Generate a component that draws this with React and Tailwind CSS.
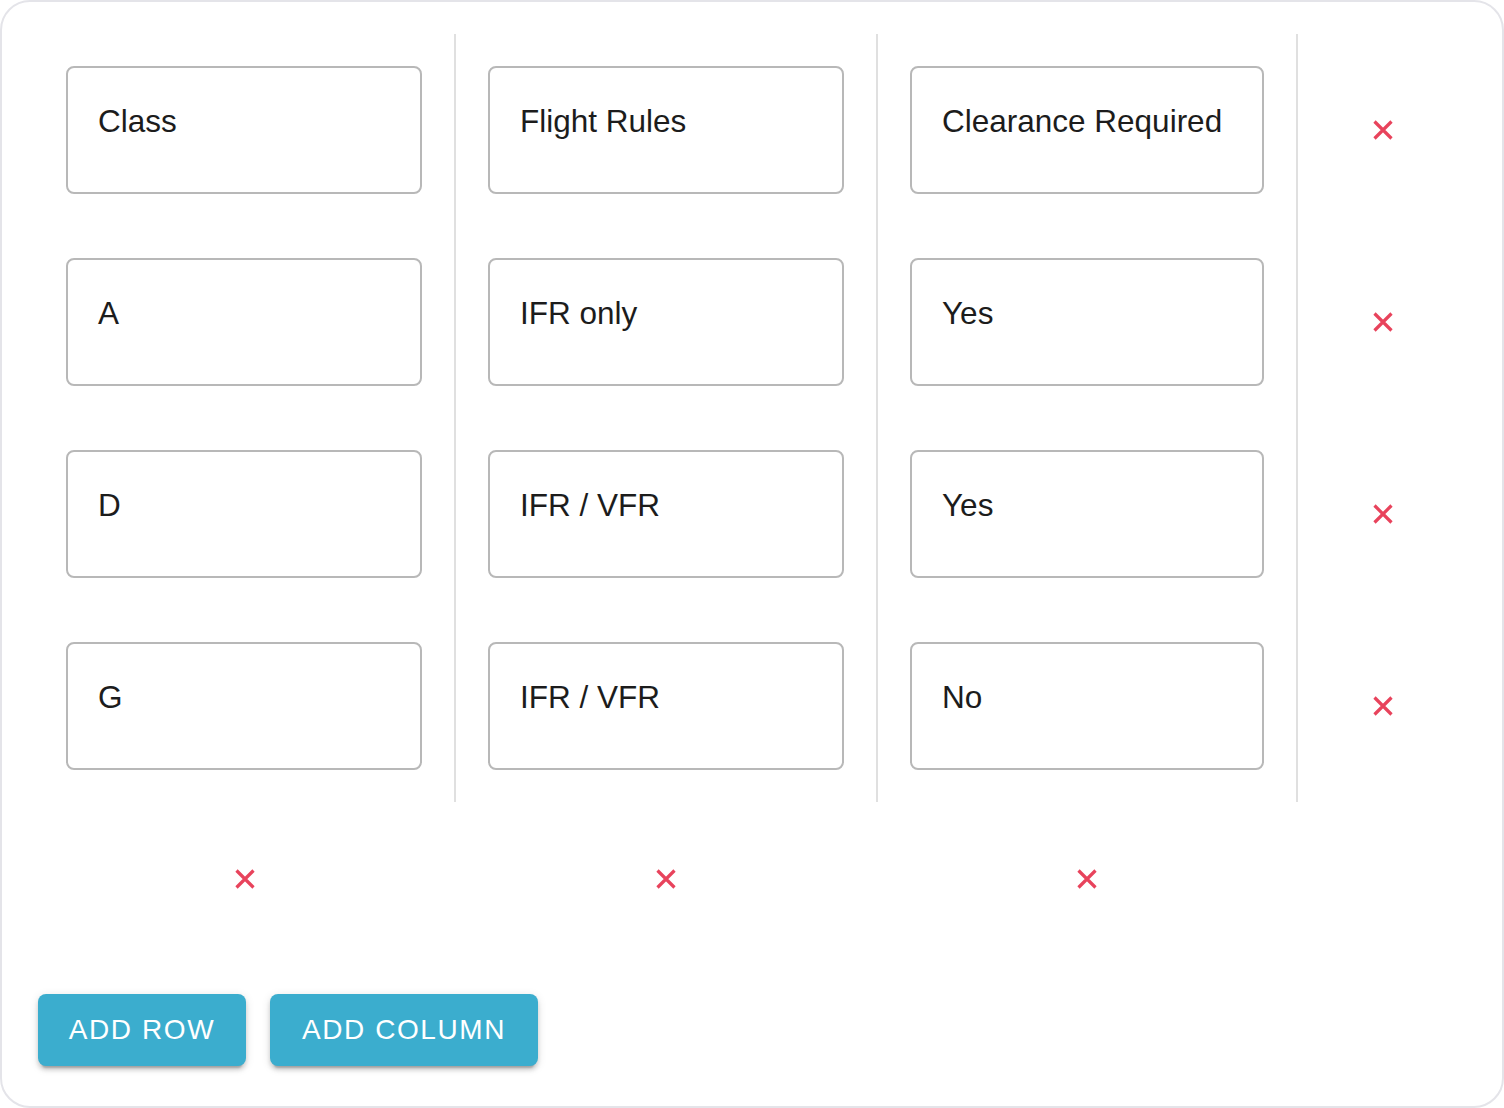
const columns = [
  ["Class", "A", "D", "G"],
  ["Flight Rules", "IFR only", "IFR / VFR", "IFR / VFR"],
  ["Clearance Required", "Yes", "Yes", "No"],
];

function CloseIcon() {
  return (
    <svg width="20" height="20" viewBox="0 0 20 20" fill="none">
      <path d="M1.5 1.5 L18.5 18.5 M18.5 1.5 L1.5 18.5" stroke="#e8435c" strokeWidth="3.2" />
    </svg>
  );
}

function Cell({ value, narrow }) {
  return (
    <div className="py-[32px]">
      <div
        className={`${narrow ? "w-[354px]" : "w-[356px]"} h-[128px] rounded-[8px] border-2 border-[#b8b8b8] bg-white pl-[30px] pr-[28px] pt-[35px] text-[31.5px] leading-[37px] text-[#1c1c1c]`}
      >
        {value}
      </div>
    </div>
  );
}

function Button({ children, width }) {
  return (
    <button
      className={`${width} h-[72px] rounded-[8px] bg-[#3badce] text-[28px] tracking-[1.6px] text-white uppercase flex items-center justify-center shadow-[0_6px_2px_-4px_rgba(0,0,0,0.2),0_4px_4px_0_rgba(0,0,0,0.14),0_2px_10px_0_rgba(0,0,0,0.12)]`}
    >
      {children}
    </button>
  );
}

export default function App() {
  return (
    <div
      className="w-[1504px] h-[1108px] rounded-[30px] border-2 border-[#e4e4e9] bg-white pt-[32px] px-[32px] pb-[40px] flex flex-col"
      style={{ fontFamily: '"Liberation Sans", Arial, sans-serif' }}
    >
      <div className="flex">
        {columns.map((col, i) => (
          <div key={i} className="flex flex-col px-[32px] border-r-2 border-[#e0e0e0]">
            {col.map((v, j) => (
              <Cell key={j} value={v} narrow={i === 2} />
            ))}
          </div>
        ))}
        <div className="flex flex-col w-[170px]">
          {columns[0].map((_, j) => (
            <div key={j} className="h-[192px] flex items-center justify-center">
              <CloseIcon />
            </div>
          ))}
        </div>
      </div>

      <div className="flex h-[154px] items-center">
        {columns.map((_, i) => (
          <div key={i} className="w-[421px] flex justify-center">
            <CloseIcon />
          </div>
        ))}
      </div>

      <div className="flex gap-[24px] mt-auto ml-[4px]">
        <Button width="w-[208px]">Add Row</Button>
        <Button width="w-[268px]">Add Column</Button>
      </div>
    </div>
  );
}
